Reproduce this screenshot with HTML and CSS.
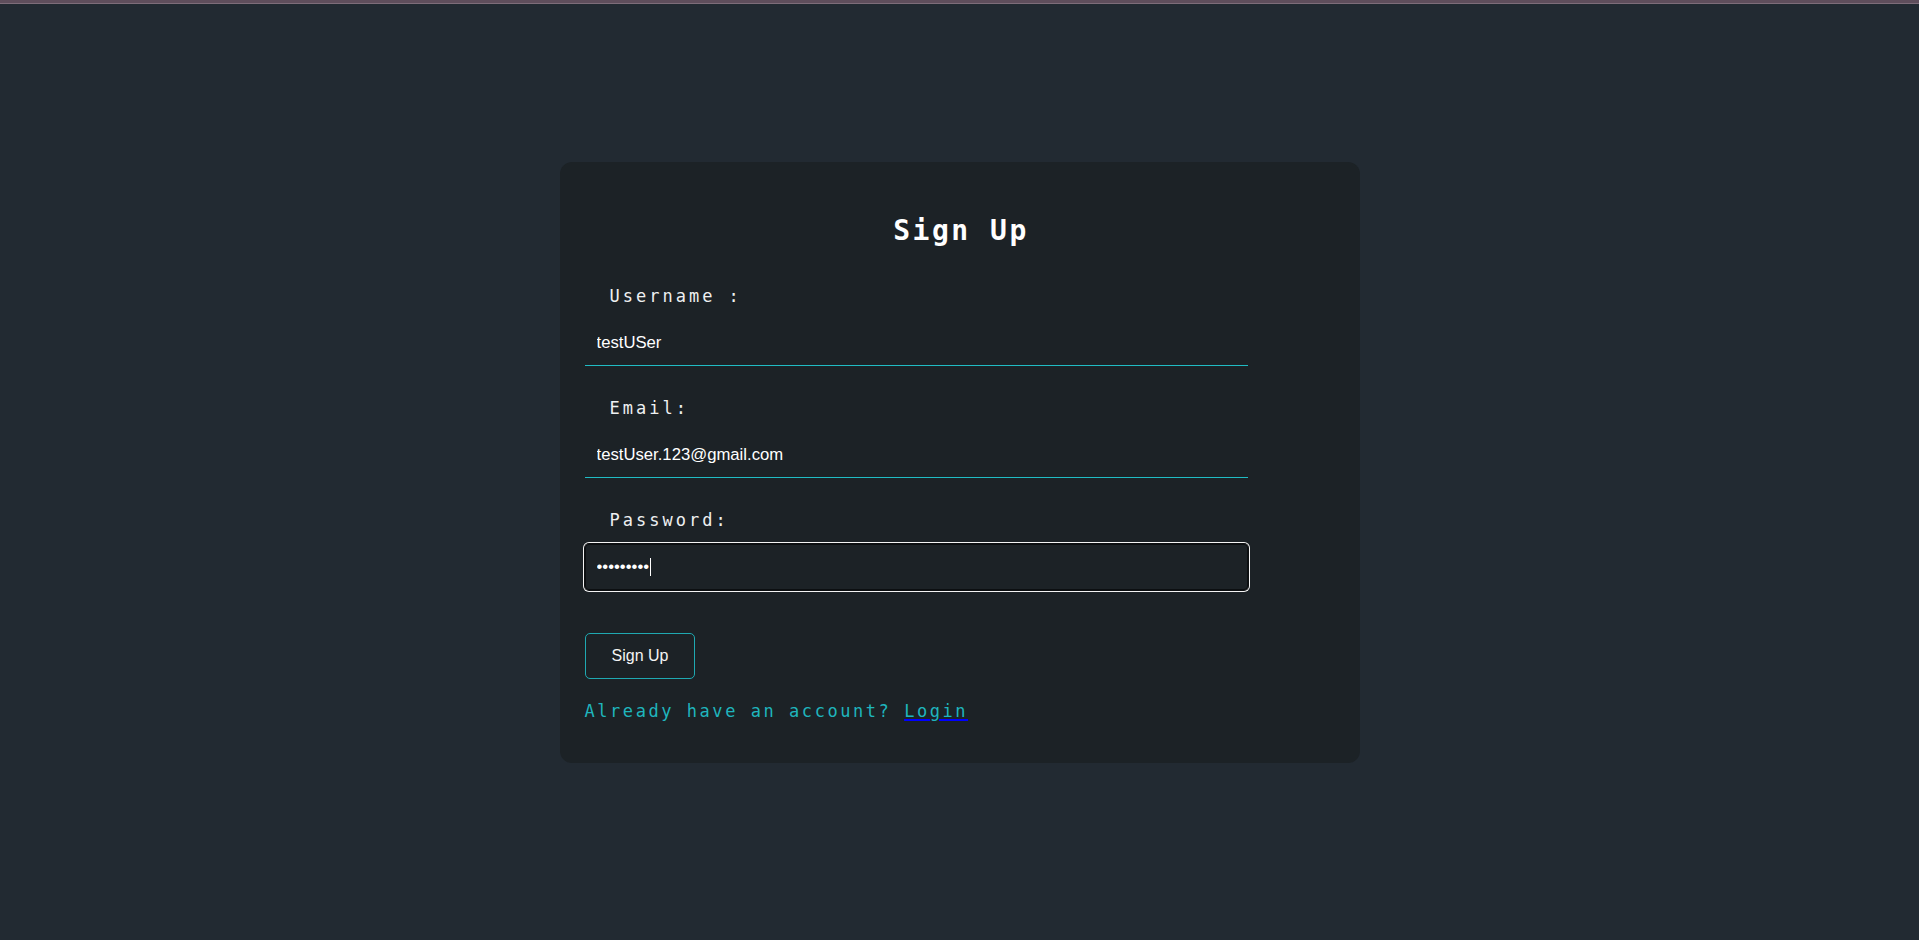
FILE: index.html
```html
<!DOCTYPE html>
<html lang="en">
<head>
<meta charset="utf-8">
<title>Sign Up</title>
<link rel="stylesheet" href="styles.css">
</head>
<body>
<div class="topbar"></div>
<main class="page">
  <form class="card" onsubmit="return false">
    <h1 class="title">Sign Up</h1>
    <div class="group">
      <label class="label" for="username">Username :</label>
      <input class="field" id="username" type="text" value="testUSer">
    </div>
    <div class="group">
      <label class="label" for="email">Email:</label>
      <input class="field" id="email" type="email" value="testUser.123@gmail.com">
    </div>
    <div class="group">
      <label class="label" for="password">Password:</label>
      <div class="field-wrap">
        <input class="field field-active" id="password" type="password" value="123456789">
        <span class="caret"></span>
      </div>
    </div>
    <button class="btn" type="submit">Sign Up</button>
    <p class="switch">Already have an account? <a class="switch-link" href="#"><span class="switch-text">Login</span></a></p>
  </form>
</main>
</body>
</html>
```
FILE: styles.css
```css
* { box-sizing: border-box; }

html, body {
  margin: 0;
  padding: 0;
  height: 100%;
}

body {
  background: #222a32;
  font-family: "DejaVu Sans Mono", monospace;
  color: #eef0f1;
  overflow: hidden;
}

.topbar {
  height: 4px;
  background: #5f4e5c;
  border-bottom: 1px solid #7e6d7a;
}

.page {
  padding-top: 158px;
}

.card {
  width: 800px;
  margin: 0 auto;
  background: #1c2226;
  border-radius: 12px;
  padding: 52px 25px 42px;
  display: flex;
  flex-direction: column;
  align-items: flex-start;
}

.title {
  align-self: stretch;
  margin: 0 0 38px;
  text-align: center;
  font-family: "DejaVu Sans Mono", monospace;
  font-size: 28px;
  font-weight: bold;
  line-height: 34px;
  letter-spacing: 2.5px;
  color: #ffffff;
  padding-left: 3px;
}

.group {
  display: flex;
  flex-direction: column;
  gap: 14px;
  margin-bottom: 32px;
}

.group:last-of-type {
  margin-bottom: 0;
}

.label {
  padding-left: 25px;
  font-size: 17px;
  line-height: 20px;
  letter-spacing: 3px;
  color: #eef0f1;
}

.field-wrap {
  position: relative;
}

.field {
  display: block;
  width: 663px;
  height: 46px;
  margin: 0;
  padding: 0 12px;
  background: transparent;
  border: none;
  border-bottom: 1px solid #20bcc4;
  border-radius: 0;
  font-family: "Liberation Sans", Arial, sans-serif;
  font-size: 16.7px;
  color: #ffffff;
  caret-color: #ffffff;
}

.field:focus {
  outline: none;
}

.field-active {
  border-bottom: none;
  border-radius: 4px;
  box-shadow: inset 0 0 0 1px #0c0f11, 0 0 0 1px #0c0f11, 0 0 0 2px #f4f4f4;
}

.caret {
  position: absolute;
  left: 65px;
  top: 14px;
  width: 1px;
  height: 18px;
  background: #ffffff;
}

.btn {
  margin-top: 43px;
  padding: 13px 26px;
  background: transparent;
  border: 1px solid #1fa9b1;
  border-radius: 5px;
  font-family: "Liberation Sans", Arial, sans-serif;
  font-size: 16px;
  line-height: 18px;
  color: #f4f4f4;
  cursor: pointer;
}

.switch {
  margin: 22px 0 0;
  font-size: 17px;
  line-height: 20px;
  letter-spacing: 2.55px;
  color: #1fb5bd;
}

.switch-link {
  color: #0000ff;
  text-decoration: underline;
  text-decoration-color: #0000ff;
  text-decoration-thickness: 1.5px;
  text-underline-offset: 2px;
}

.switch-text {
  color: #1fb5bd;
}
```
